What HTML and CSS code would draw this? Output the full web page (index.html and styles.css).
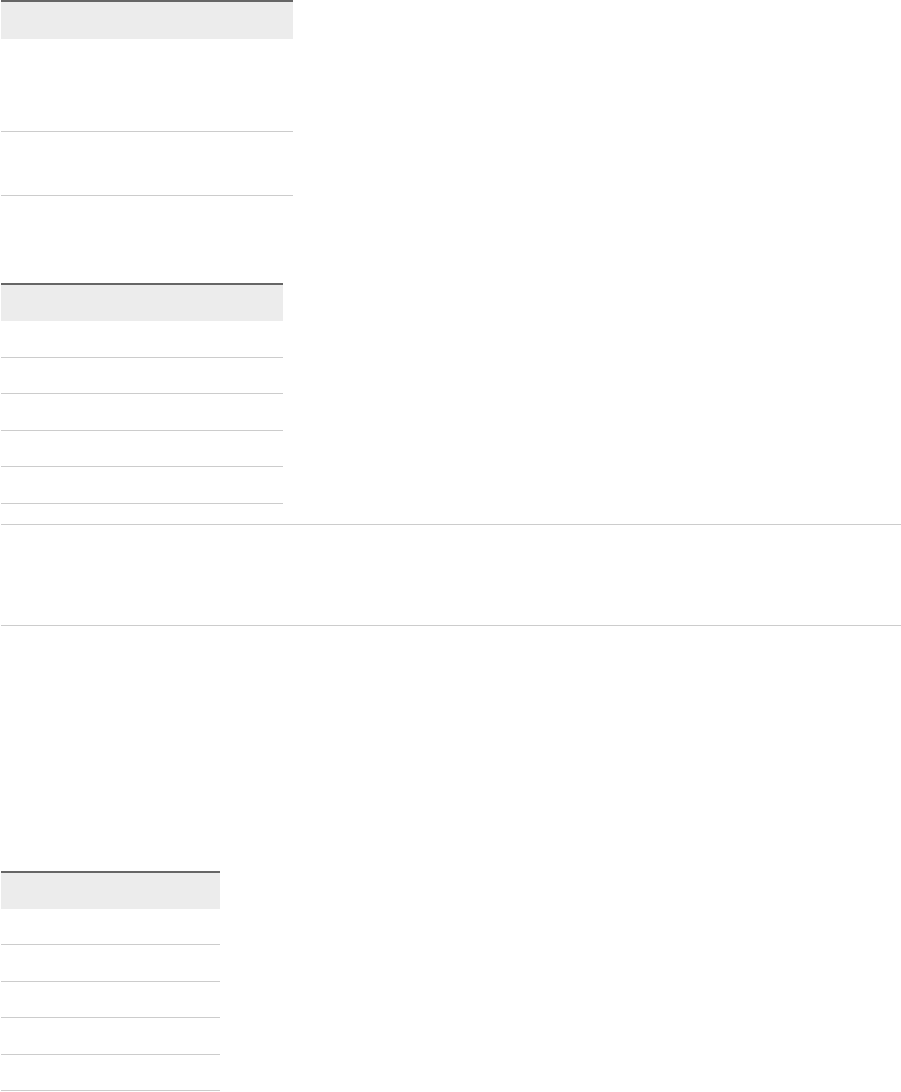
FILE: index.html
```html
<!DOCTYPE html>
<html>
<head>
<meta charset="utf-8">
<link rel="stylesheet" href="styles.css">
</head>
<body>
<div class="page">
  <div class="tbl tbl-a">
    <div class="head"></div>
    <div class="row row-tall"></div>
    <div class="row row-mid"></div>
  </div>

  <div class="tbl tbl-b">
    <div class="head"></div>
    <div class="row"></div>
    <div class="row"></div>
    <div class="row"></div>
    <div class="row"></div>
    <div class="row"></div>
  </div>

  <div class="band"></div>

  <div class="tbl tbl-c">
    <div class="head"></div>
    <div class="row"></div>
    <div class="row"></div>
    <div class="row"></div>
    <div class="row"></div>
    <div class="row"></div>
  </div>
</div>
</body>
</html>
```

FILE: styles.css
```css
html, body {
  margin: 0;
  padding: 0;
  background: #ffffff;
  font-family: "Liberation Sans", Arial, sans-serif;
}

.page {
  display: flex;
  flex-direction: column;
  align-items: flex-start;
  padding-left: 1px;
}

.tbl {
  display: flex;
  flex-direction: column;
  border-top: 2px solid #666666;
}

.head {
  height: 37px;
  background: #ececec;
}

.row {
  height: 35.5px;
  border-bottom: 1px solid #cccccc;
}

.tbl-a {
  width: 292px;
}

.tbl-a .row-tall {
  height: 92px;
}

.tbl-a .row-mid {
  height: 63px;
}

.tbl-b {
  width: 282px;
  margin-top: 87px;
}

.tbl-b .head,
.tbl-c .head {
  height: 36px;
}

.band {
  align-self: stretch;
  height: 100px;
  margin-top: 20px;
  border-top: 1px solid #cccccc;
  border-bottom: 1px solid #cccccc;
}

.tbl-c {
  width: 219px;
  margin-top: 245px;
}
```
